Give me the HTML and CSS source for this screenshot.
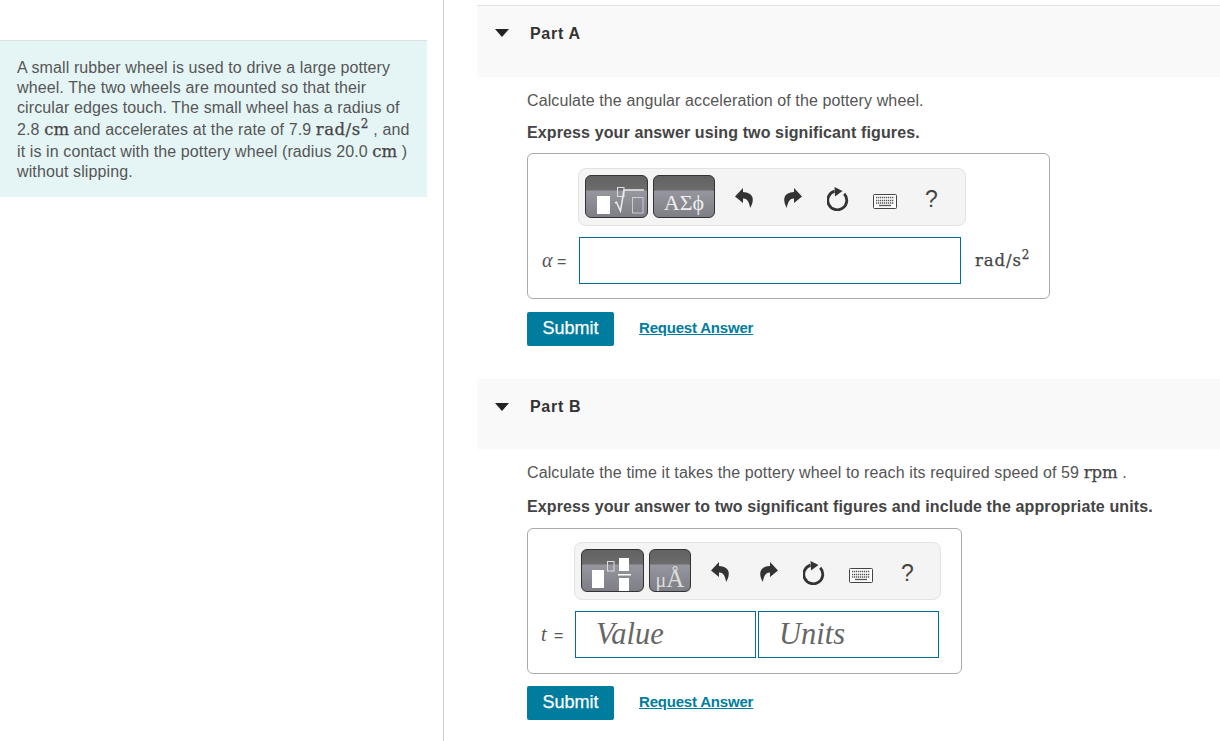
FILE: index.html
```html
<!DOCTYPE html>
<html lang="en">
<head>
<meta charset="utf-8">
<title>Pottery wheel</title>
<link rel="stylesheet" href="styles.css">
</head>
<body>
<svg class="defs" width="0" height="0" aria-hidden="true">
  <defs>
    <symbol id="undo" viewBox="0 0 18 20"><path d="M8 0 0 8.500 8 15v-4.500c3.600-.3 6 2.300 7.200 9.500 2.300-4.300 3.200-8 2.100-11-1.100-3-4.300-4.800-9.300-5z"/></symbol>
    <symbol id="redo" viewBox="0 0 18 20"><path d="M10 0 18 8.500 10 15v-4.500c-3.600-.3-6 2.300-7.200 9.500-2.300-4.300-3.200-8-2.100-11 1.100-3 4.300-4.800 9.300-5z"/></symbol>
    <symbol id="reset" viewBox="0 0 22 24"><path class="ring" d="M17.200 6.800A9.500 9.500 0 1 1 7.500 4.200"/><path d="M7.500 0 15.500 4 8 9.500z"/></symbol>
    <symbol id="keys" viewBox="0 0 24 15"><rect class="kb" x=".5" y=".5" width="23" height="14" rx="1"/><path class="kk" d="M3 3.500h18M3 6.500h18M3 9h18"/><path class="kbar" d="M6 11.500h12"/></symbol>
  </defs>
</svg>
<div class="page">
  <aside class="intro">
    <div class="statement">
      <span class="line">A small rubber wheel is used to drive a large pottery</span>
      <span class="line">wheel. The two wheels are mounted so that their</span>
      <span class="line">circular edges touch. The small wheel has a radius of</span>
      <span class="line line-tall">2.8 <span class="math">cm</span> and accelerates at the rate of 7.9 <span class="math rate">rad/s<sup>2</sup></span> , and</span>
      <span class="line line-tall">it is in contact with the pottery wheel (radius 20.0 <span class="math">cm</span> )</span>
      <span class="line">without slipping.</span>
    </div>
  </aside>
  <main class="parts">
    <section class="part part-a">
      <header class="part-head"><span class="caret"></span><h2>Part A</h2></header>
      <div class="part-body">
        <p class="question">Calculate the angular acceleration of the pottery wheel.</p>
        <p class="instruction">Express your answer using two significant figures.</p>
        <div class="answer answer-a">
          <div class="toolbar toolbar-a">
            <button class="tool tool-wide" type="button"><svg width="63" height="43" viewBox="0 0 63 43"><rect x="12" y="21" width="13" height="18" fill="#fff"/><rect x="32.500" y="12.500" width="6.500" height="9" fill="none" stroke="#ddd"/><path d="M30 28l1.500-.8 4 8.800 3.500-21h20" fill="none" stroke="#eee" stroke-width="1.500"/><rect x="47.500" y="22.500" width="10.500" height="15.500" fill="none" stroke="#ccc"/></svg></button>
            <button class="tool tool-sym" type="button"><span class="sym-text">ΑΣϕ</span></button>
            <svg class="ic ic-undo"><use href="#undo"/></svg>
            <svg class="ic ic-redo"><use href="#redo"/></svg>
            <svg class="ic ic-reset"><use href="#reset"/></svg>
            <svg class="ic ic-keys"><use href="#keys"/></svg>
            <span class="help">?</span>
          </div>
          <div class="entry entry-a">
            <span class="var"><i class="var-name">α</i> =</span>
            <span class="field field-full"></span>
            <span class="math rate unit">rad/s<sup>2</sup></span>
          </div>
        </div>
        <div class="actions"><button class="submit" type="button">Submit</button><a class="request" href="#">Request Answer</a></div>
      </div>
    </section>
    <section class="part part-b">
      <header class="part-head"><span class="caret"></span><h2>Part B</h2></header>
      <div class="part-body">
        <p class="question">Calculate the time it takes the pottery wheel to reach its required speed of 59 <span class="math">rpm</span> .</p>
        <p class="instruction">Express your answer to two significant figures and include the appropriate units.</p>
        <div class="answer answer-b">
          <div class="toolbar toolbar-b">
            <button class="tool tool-wide" type="button"><svg width="63" height="43" viewBox="0 0 63 43"><rect x="11" y="21" width="12" height="18" fill="#fff"/><rect x="26.500" y="12.500" width="6.500" height="9.500" fill="none" stroke="#ddd"/><rect x="38" y="9" width="10" height="13" fill="#fff"/><rect x="37" y="25" width="13" height="1.500" fill="#fff"/><rect x="38" y="29" width="10" height="14" fill="#fff"/></svg></button>
            <button class="tool tool-unit" type="button"><span class="unit-text"><span class="unit-mu">μ</span>Å</span></button>
            <svg class="ic ic-undo"><use href="#undo"/></svg>
            <svg class="ic ic-redo"><use href="#redo"/></svg>
            <svg class="ic ic-reset"><use href="#reset"/></svg>
            <svg class="ic ic-keys"><use href="#keys"/></svg>
            <span class="help">?</span>
          </div>
          <div class="entry entry-b">
            <span class="var"><i class="var-t">t</i> =</span>
            <span class="field field-half">Value</span>
            <span class="field field-half">Units</span>
          </div>
        </div>
        <div class="actions"><button class="submit" type="button">Submit</button><a class="request" href="#">Request Answer</a></div>
      </div>
    </section>
  </main>
</div>
</body>
</html>
```
FILE: styles.css
```css
* { box-sizing: border-box; }
html, body { margin: 0; height: 100%; }
body { font-family: "Liberation Sans", Arial, sans-serif; color: #555; background: #fff; overflow: hidden; }
.defs { position: absolute; }
.page { display: flex; height: 741px; overflow: hidden; }

.intro { width: 444px; flex: none; border-right: 1px solid #c9ced2; padding-top: 40px; }
.statement { width: 427px; height: 157px; background: #e5f5f5; border-top: 1px solid #d9e0e0; padding: 17px 0 0 17px; font-size: 16px; letter-spacing: .11px; }
.line { display: block; height: 20px; line-height: 20px; white-space: nowrap; }
.line-tall { height: 22px; line-height: 22px; padding-top: 1px; }
.math { font-family: "DejaVu Serif", serif; font-size: 16.500px; line-height: 1; font-weight: 400; color: #444; letter-spacing: 0; -webkit-text-stroke: .25px #444; }
.rate { letter-spacing: .5px; }
sup { font-size: 12px; line-height: 0; vertical-align: baseline; position: relative; top: -7px; }

.parts { flex: 1; padding: 5px 0 0 33px; min-width: 0; }
.part-head { height: 72px; background: #f9f9f9; border-top: 1px solid #e2e2e2; display: flex; align-items: flex-start; padding: 18px 0 0 18px; }
.part-b { margin-top: 33px; }
.part-b .part-head { height: 70px; border-top: 0; padding-top: 18px; }
.caret { width: 0; height: 0; border: 7px solid transparent; border-top: 8px solid #222; border-bottom: 0; margin-top: 5px; margin-right: 21px; }
.part-b .caret { margin-top: 6px; }
h2 { margin: 0; font-size: 16px; line-height: 20px; font-weight: 700; color: #333; letter-spacing: .7px; }
.part-body { padding-left: 50px; }
.question { margin: 0; padding-top: 14px; font-size: 16px; line-height: 20px; letter-spacing: .11px; }
.instruction { margin: 12px 0 0; font-size: 16px; line-height: 20px; font-weight: 700; color: #444; letter-spacing: .12px; }
.part-b .instruction { margin-top: 14px; }

.answer { border: 1px solid #aaa; border-radius: 6px; background: #fff; }
.answer-a { width: 523px; height: 146px; margin-top: 10px; padding: 14px 0 0 50px; }
.answer-b { width: 435px; height: 146px; margin-top: 11px; padding: 13px 0 0 46px; }
.toolbar { display: flex; align-items: flex-start; height: 58px; background: #f4f4f4; border: 1px solid #e2e2e2; border-radius: 8px; padding: 6px; }
.toolbar-a { width: 388px; }
.toolbar-b { width: 367px; }
.tool { height: 43px; padding: 0; margin: 0; border: 1px solid #333; border-radius: 6px; background: linear-gradient(#626262 0, #6c6c6c 14px, #96969e 15px, #7e7e86 100%); overflow: hidden; display: block; }
.tool svg { display: block; margin: -1px; }
.tool-wide { width: 63px; }
.tool-sym { width: 62px; margin-left: 5px; }
.tool-unit { width: 42px; margin-left: 5px; }
.sym-text { display: block; font-family: "Liberation Serif", serif; font-size: 22px; line-height: 22px; padding-top: 13px; color: #eee; white-space: nowrap; }
.unit-text { display: block; font-family: "Liberation Serif", serif; font-size: 25px; line-height: 24px; padding-top: 17px; color: #ddd; white-space: nowrap; }
.unit-mu { font-size: 20px; }

.ic { fill: #333; flex: none; overflow: visible; }
.ic-undo, .ic-redo { width: 18px; height: 20px; margin-top: 13px; margin-left: 31px; }
.ic-undo { margin-left: 20px; }
.ic-reset { width: 22px; height: 24px; margin-top: 12px; margin-left: 25px; }
.ic-keys { width: 24px; height: 15px; margin-top: 19px; margin-left: 24px; fill: none; }
.ring { fill: none; stroke: #333; stroke-width: 2.800; }
.kb { fill: #fff; stroke: #444; }
.kk { stroke: #555; stroke-width: 1.300; stroke-dasharray: 1.300 .700; fill: none; }
.kbar { stroke: #555; stroke-width: 1.300; fill: none; }
.help { flex: none; font-size: 23px; line-height: 24px; color: #444; margin-top: 12px; margin-left: 28px; }

.entry { display: flex; align-items: center; }
.entry-a { margin-top: 11px; margin-left: -37px; }
.entry-b { margin-top: 11px; margin-left: -33px; }
.var { font-family: "Liberation Sans", sans-serif; font-size: 16px; color: #555; white-space: nowrap; padding-left: 1px; }
.var-name, .var-t { font-family: "Liberation Serif", serif; font-size: 20px; }
.entry-a .var { width: 38px; padding-left: 1px; }
.entry-b .var { width: 34px; padding-left: 0; word-spacing: 3px; }
.field { display: block; height: 47px; border: 1px solid #006f93; background: #fff; }
.field-full { width: 382px; }
.field-half { width: 181px; font-family: "Liberation Serif", serif; font-style: italic; font-size: 30.500px; line-height: 44px; color: #666; padding-left: 20px; }
.field-half + .field-half { margin-left: 2px; }
.unit { margin-left: 14px; position: relative; top: 1px; letter-spacing: .9px; }

.actions { display: flex; align-items: center; height: 34px; margin-top: 13px; }
.part-b .actions { margin-top: 12px; }
.submit { width: 87px; height: 34px; padding: 0 0 2px; border: 0; border-radius: 2px; background: #007c9e; color: #fff; font-family: "Liberation Sans", sans-serif; font-size: 18px; -webkit-text-stroke: .25px #fff; }
.request { margin-left: 25px; padding-bottom: 3px; font-size: 15px; font-weight: 700; color: #007c9e; letter-spacing: -.2px; }
```
